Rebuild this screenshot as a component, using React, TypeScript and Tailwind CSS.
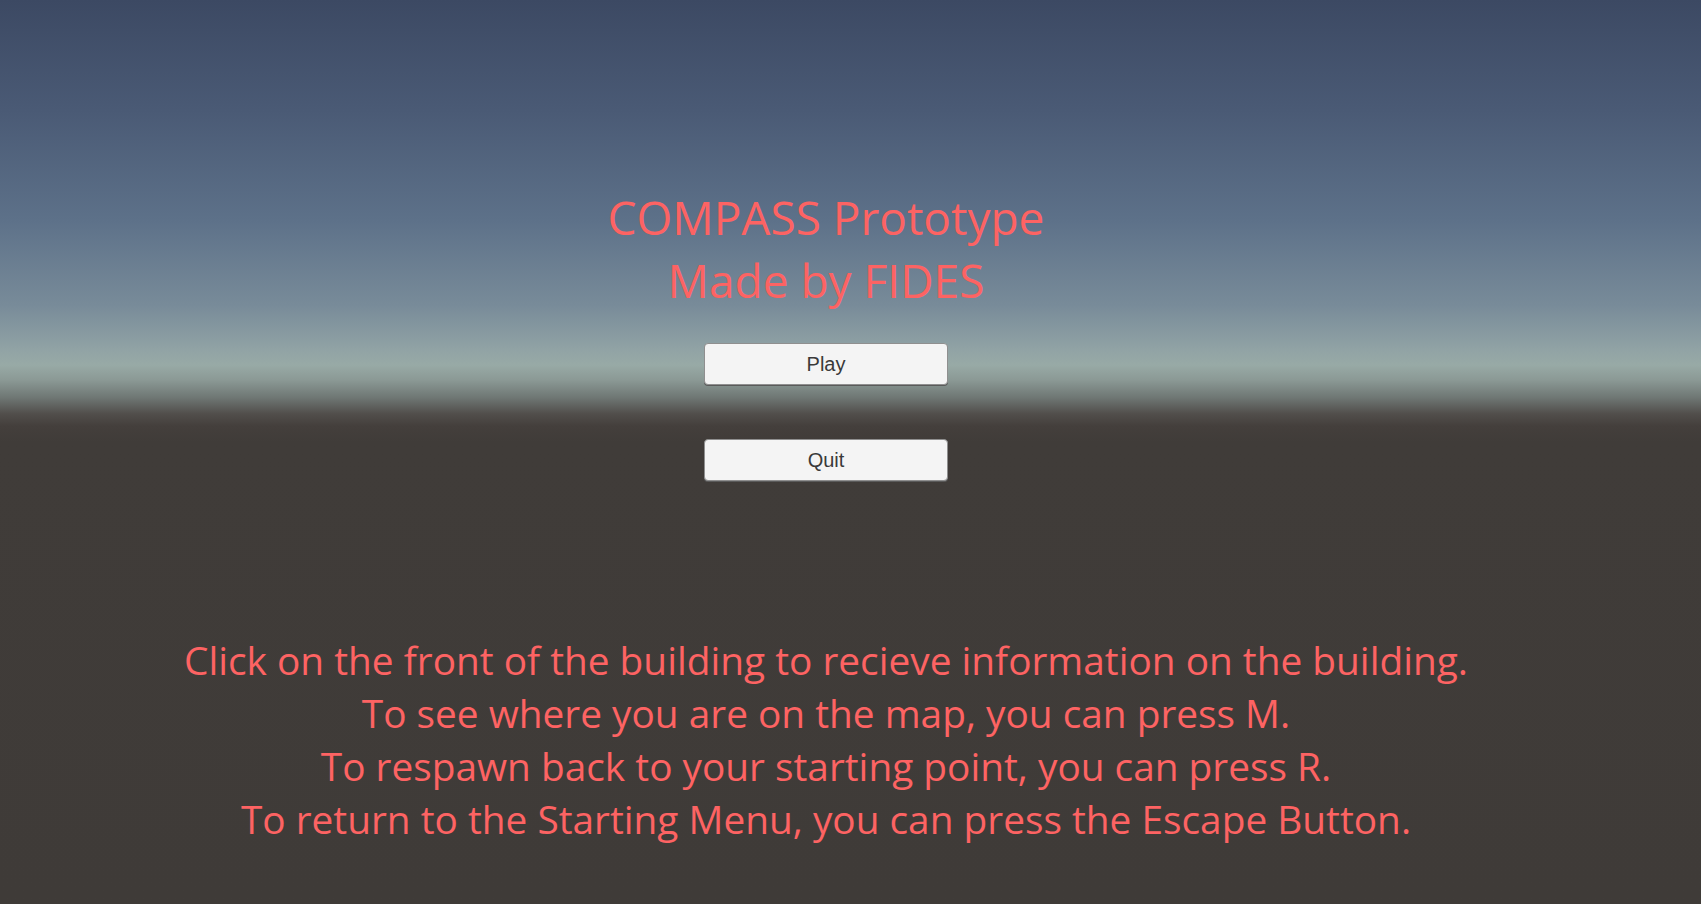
export default function App() {
  const lines = [
    'Click on the front of the building to recieve information on the building.',
    'To see where you are on the map, you can press M.',
    'To respawn back to your starting point, you can press R.',
    'To return to the Starting Menu, you can press the Escape Button.',
  ];

  return (
    <div className="relative h-[904px] w-full overflow-hidden bg-[linear-gradient(to_bottom,#3c4963_0px,#4a5a75_110px,#5d7189_220px,#788b99_305px,#91a3a5_350px,#98aaa6_365px,#8b9995_380px,#6e7673_398px,#514e4b_414px,#443f3c_426px,#403c39_442px,#3f3b38_904px)]">
      <div className="flex flex-col items-center pr-[49px] pt-[186px] font-['Open_Sans',sans-serif] text-[#fd6363]">
        <div className="text-center text-[46px] leading-[63px]">
          <div>COMPASS Prototype</div>
          <div>Made by FIDES</div>
        </div>

        <div className="mt-[31px] flex flex-col gap-[54px]">
          <button className="h-[42px] w-[244px] rounded-[4px] border border-[#8f8f8f] bg-[#f4f4f4] font-['Liberation_Sans',sans-serif] text-[20px] text-[#3a3a3a] shadow-[0_1px_0_#5a5a5a]">
            Play
          </button>
          <button className="h-[42px] w-[244px] rounded-[4px] border border-[#8f8f8f] bg-[#f4f4f4] font-['Liberation_Sans',sans-serif] text-[20px] text-[#3a3a3a] shadow-[0_1px_0_#5a5a5a]">
            Quit
          </button>
        </div>

        <div className="mt-[153px] text-center text-[38.8px] leading-[53px]">
          {lines.map((line) => (
            <div key={line}>{line}</div>
          ))}
        </div>
      </div>
    </div>
  );
}
